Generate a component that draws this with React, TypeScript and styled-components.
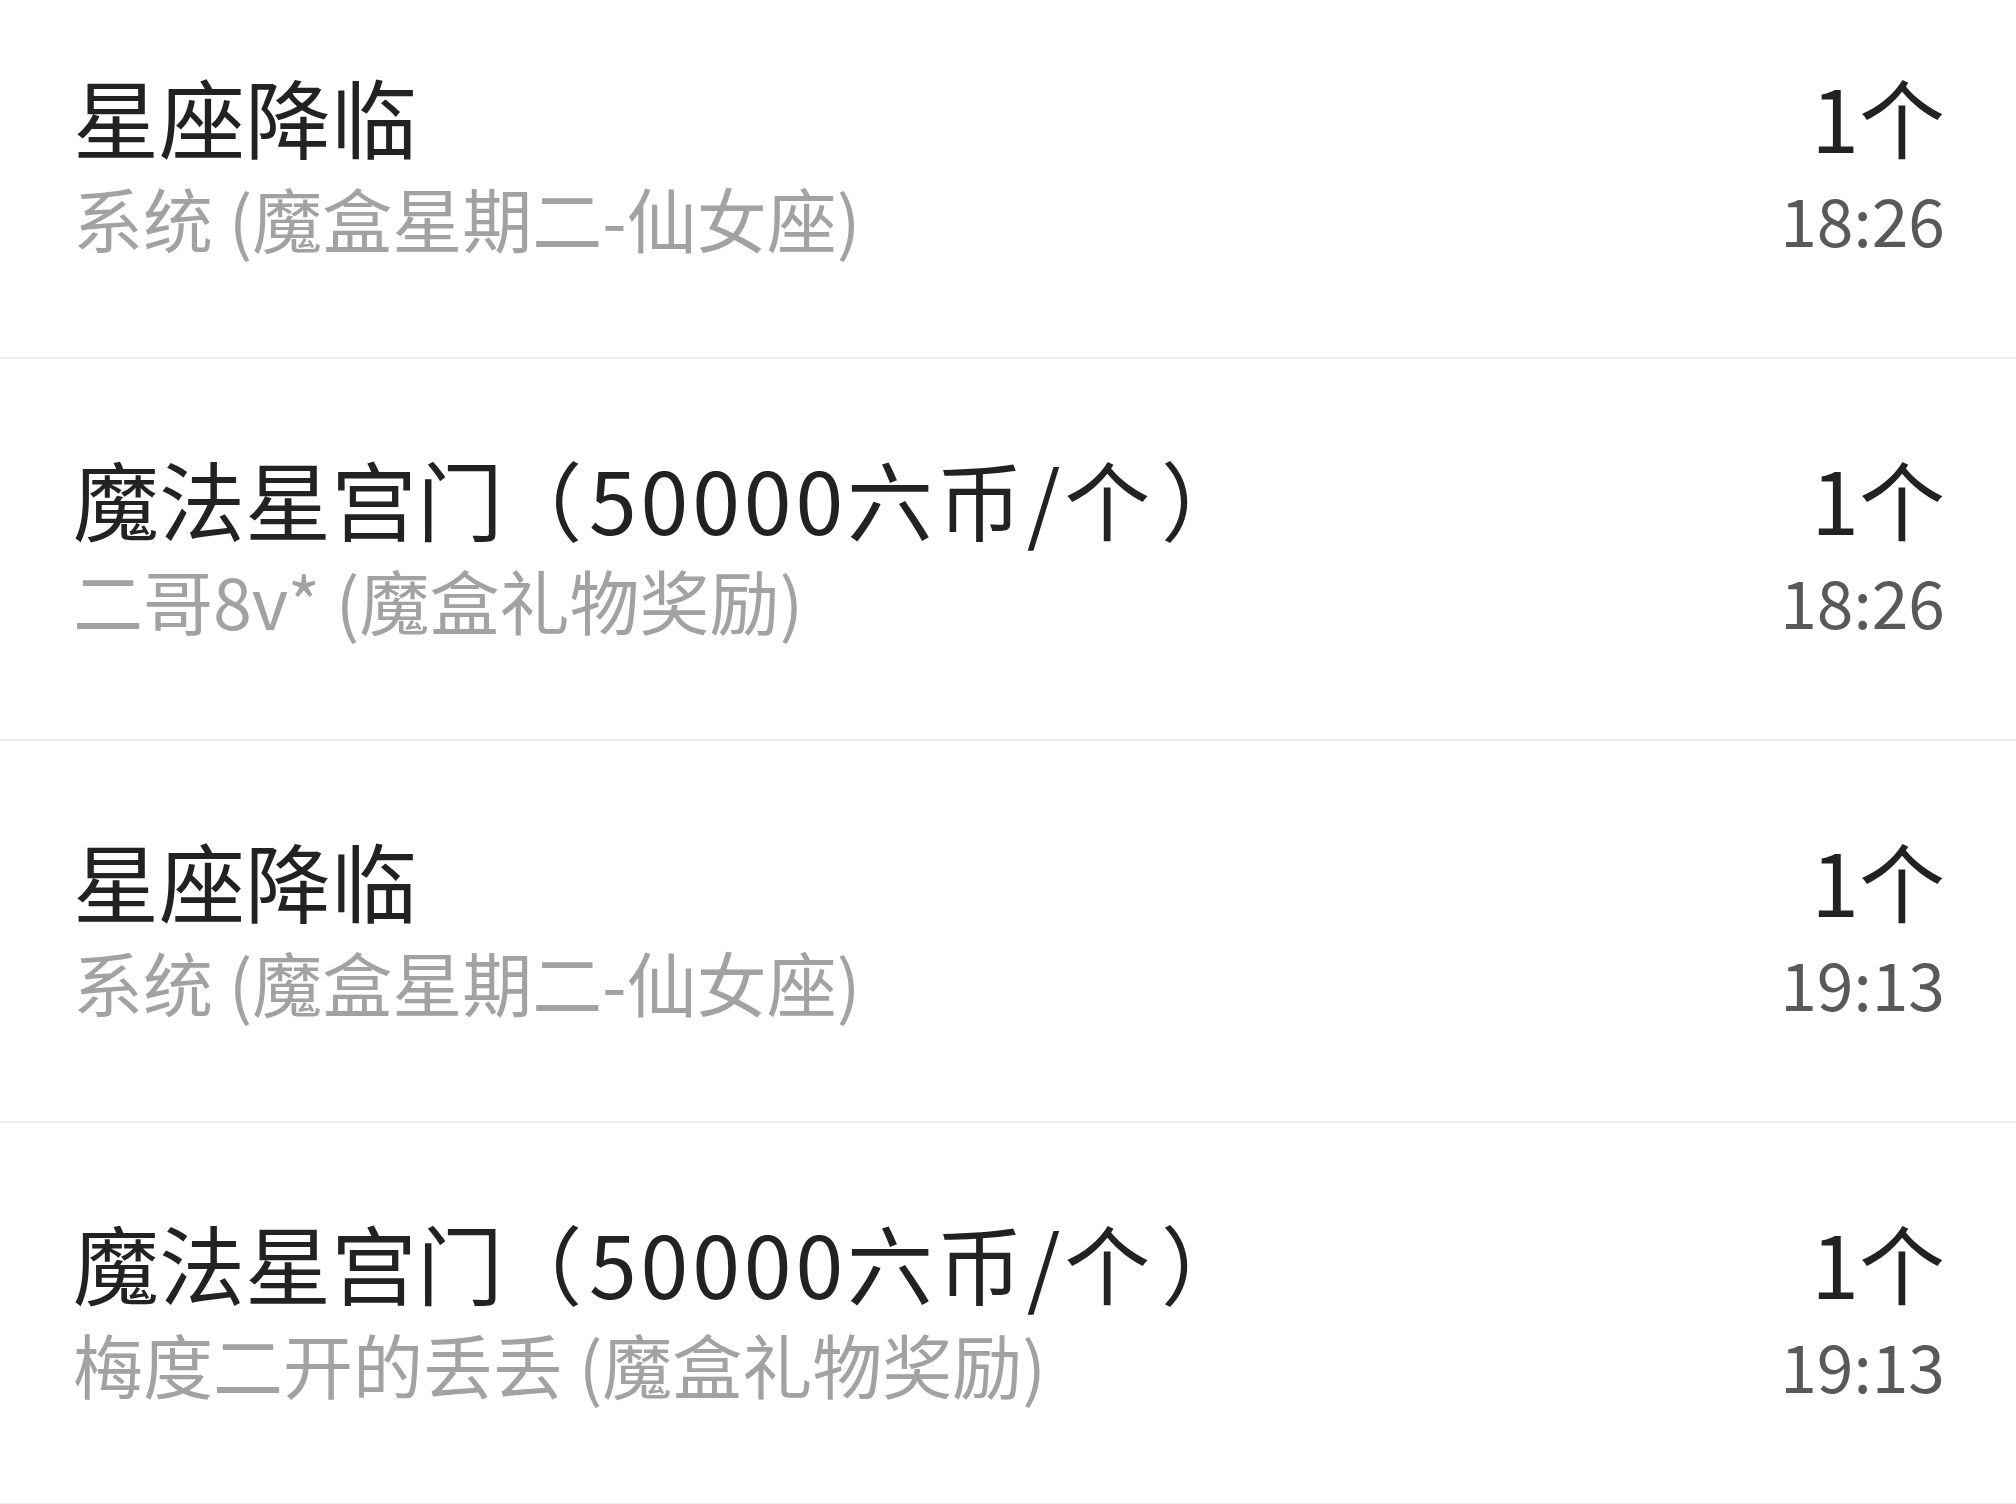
import React from "react";
import styled, { createGlobalStyle } from "styled-components";

const GlobalStyle = createGlobalStyle`
  html, body {
    margin: 0;
    padding: 0;
    background: #ffffff;
  }
  body {
    width: 2016px;
    height: 1504px;
    overflow: hidden;
    font-family: "Noto Sans CJK SC", "Noto Sans", sans-serif;
  }
`;

const List = styled.ul`
  list-style: none;
  margin: -23px 0 0 0;
  padding: 0;
  display: flex;
  flex-direction: column;
`;

const Row = styled.li`
  height: 380px;
  box-sizing: content-box;
  border-bottom: 2px solid #ededed;
  padding: 0 71px 0 73px;
  display: flex;
  align-items: center;
  justify-content: space-between;
`;

const Main = styled.div`
  display: flex;
  flex-direction: column;
  min-width: 0;
`;

const Side = styled.div`
  display: flex;
  flex-direction: column;
  align-items: flex-end;
`;

const Title = styled.div`
  font-size: 86px;
  line-height: 102px;
  color: #222222;
  white-space: nowrap;
`;

const Paren = styled.span<{ $side: "open" | "close" }>`
  display: inline-block;
  width: 1em;
  text-align: left;
  text-indent: ${(p) => (p.$side === "open" ? "-0.08em" : "0.08em")};
`;

const Price = styled.span`
  letter-spacing: 0.045em;
`;

const Sub = styled.div`
  font-size: 70px;
  line-height: 102px;
  color: #a2a2a2;
  white-space: nowrap;
`;

const Time = styled.div`
  font-size: 66px;
  line-height: 102px;
  color: #595959;
  white-space: nowrap;
`;

type Item = { name: string; price?: string; sub: string; count: string; time: string };

const items: Item[] = [
  { name: "星座降临", sub: "系统 (魔盒星期二-仙女座)", count: "1个", time: "18:26" },
  { name: "魔法星宫门", price: "50000六币/个", sub: "二哥8v* (魔盒礼物奖励)", count: "1个", time: "18:26" },
  { name: "星座降临", sub: "系统 (魔盒星期二-仙女座)", count: "1个", time: "19:13" },
  { name: "魔法星宫门", price: "50000六币/个", sub: "梅度二开的丢丢 (魔盒礼物奖励)", count: "1个", time: "19:13" },
];

export default function App() {
  return (
    <>
      <GlobalStyle />
      <List>
        {items.map((it, i) => (
          <Row key={i}>
            <Main>
              <Title>
                {it.name}
                {it.price && (
                  <>
                    <Paren $side="open">（</Paren>
                    <Price>{it.price}</Price>
                    <Paren $side="close">）</Paren>
                  </>
                )}
              </Title>
              <Sub>{it.sub}</Sub>
            </Main>
            <Side>
              <Title>{it.count}</Title>
              <Time>{it.time}</Time>
            </Side>
          </Row>
        ))}
      </List>
    </>
  );
}
